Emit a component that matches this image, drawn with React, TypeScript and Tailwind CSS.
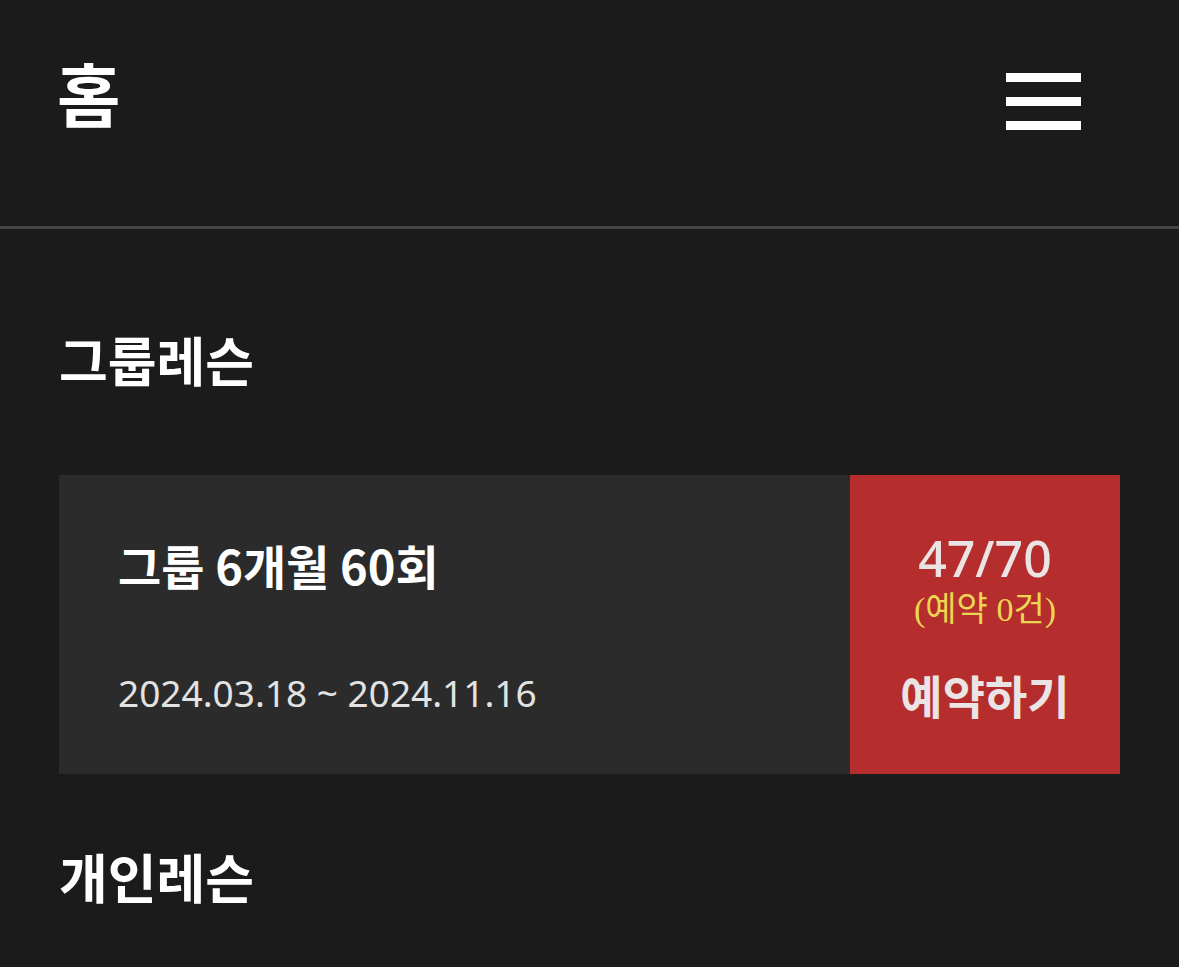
import React from "react";

const KR = { fontFamily: '"Noto Sans CJK KR", "Noto Sans", sans-serif' };

export default function App() {
  return (
    <div className="min-h-[967px] w-full bg-[#1b1b1b] text-white" style={KR}>
      <header className="flex h-[229px] items-start justify-between border-b-[3px] border-[#454545] pl-[57px] pr-[98px]">
        <h1 className="mt-[58px] text-[69px] font-bold leading-none">홈</h1>
        <button className="mt-[73px] flex w-[75px] flex-col gap-[15px]" aria-label="menu">
          <span className="block h-[9px] w-full bg-white" />
          <span className="block h-[9px] w-full bg-white" />
          <span className="block h-[9px] w-full bg-white" />
        </button>
      </header>
      <main className="px-[59px]">
        <h2 className="mt-[104px] text-[53px] font-bold leading-none">그룹레슨</h2>
        <div className="mt-[89px] flex h-[299px] bg-[#2b2b2b]">
          <div className="flex flex-1 flex-col pl-[59px] pt-[66px]">
            <div className="text-[47px] font-semibold leading-none">그룹 6개월 60회</div>
            <div
              className="mt-[86px] text-[37px] leading-none text-[#e3e3e3]"
              style={{ fontFamily: '"Noto Sans", "Noto Sans CJK KR", sans-serif' }}
            >
              2024.03.18 ~ 2024.11.16
            </div>
          </div>
          <div className="flex w-[270px] flex-col items-center bg-[#b52d2d] pt-[58px] text-[#ebe4e4]">
            <div className="text-[50px] font-medium leading-none" style={{ fontFamily: '"Noto Sans", sans-serif' }}>
              47/70
            </div>
            <div
              className="mt-[10px] text-[34px] leading-none text-[#ecd552]"
              style={{ fontFamily: '"Liberation Serif", "Noto Sans CJK KR", serif' }}
            >
              (예약 0건)
            </div>
            <div className="mt-[44px] text-[46px] font-bold leading-none">예약하기</div>
          </div>
        </div>
        <h2 className="mt-[76px] text-[53px] font-bold leading-none">개인레슨</h2>
      </main>
    </div>
  );
}
